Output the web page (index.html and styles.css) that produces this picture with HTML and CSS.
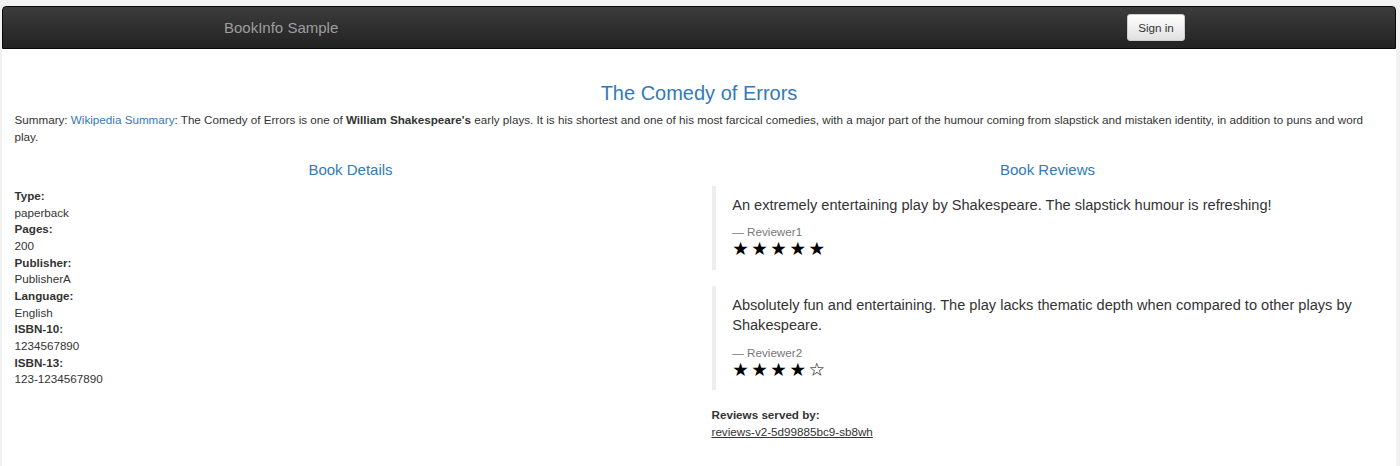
FILE: index.html
```html
<!DOCTYPE html>
<html lang="en">
<head>
    <meta charset="UTF-8">
    <title>Simple Bookstore App</title>
    <link rel="stylesheet" href="styles.css">
</head>
<body>
    <div class="page">
        <nav class="navbar">
            <div class="nav-container">
                <a class="brand" href="#">BookInfo Sample</a>
                <button class="btn-signin" type="button">Sign in</button>
            </div>
        </nav>

        <div class="content">
            <h3 class="book-title">The Comedy of Errors</h3>
            <p class="summary">Summary: <a href="#">Wikipedia Summary</a>: The Comedy of Errors is one of <b>William Shakespeare's</b> early plays. It is his shortest and one of his most farcical comedies, with a major part of the humour coming from slapstick and mistaken identity, in addition to puns and word play.</p>

            <div class="row">
                <div class="col">
                    <h4 class="col-title">Book Details</h4>
                    <dl class="details">
                        <dt>Type:</dt><dd>paperback</dd>
                        <dt>Pages:</dt><dd>200</dd>
                        <dt>Publisher:</dt><dd>PublisherA</dd>
                        <dt>Language:</dt><dd>English</dd>
                        <dt>ISBN-10:</dt><dd>1234567890</dd>
                        <dt>ISBN-13:</dt><dd>123-1234567890</dd>
                    </dl>
                </div>
                <div class="col">
                    <h4 class="col-title">Book Reviews</h4>
                    <blockquote class="review">
                        <p>An extremely entertaining play by Shakespeare. The slapstick humour is refreshing!</p>
                        <small>Reviewer1</small>
                        <div class="stars">★★★★★</div>
                    </blockquote>
                    <blockquote class="review">
                        <p>Absolutely fun and entertaining. The play lacks thematic depth when compared to other plays by Shakespeare.</p>
                        <small>Reviewer2</small>
                        <div class="stars">★★★★☆</div>
                    </blockquote>
                    <dl class="served">
                        <dt>Reviews served by:</dt>
                        <dd><u>reviews-v2-5d99885bc9-sb8wh</u></dd>
                    </dl>
                </div>
            </div>
        </div>
    </div>
</body>
</html>
```

FILE: styles.css
```css
html, body {
    margin: 0;
    padding: 0;
}
body {
    font-family: "Liberation Sans", Arial, sans-serif;
    font-size: 11.67px;
    line-height: 16.67px;
    color: #333;
    background-color: #f1f1f1;
}
.page {
    margin: 6px 4px 0 2px;
    min-height: 460px;
    background-color: #fff;
}
.navbar {
    height: 43px;
    background-image: linear-gradient(to bottom, #3c3c3c 0%, #222 100%);
    border: 1px solid #080808;
    border-radius: 4px 4px 0 0;
    box-sizing: border-box;
}
.nav-container {
    width: 975px;
    margin: 0 auto;
    padding: 0 12.5px;
    box-sizing: border-box;
    display: flex;
    align-items: center;
    justify-content: space-between;
    height: 100%;
}
.brand {
    font-size: 15px;
    color: #9d9d9d;
    text-decoration: none;
    line-height: 20px;
}
.btn-signin {
    font-family: "Liberation Sans", Arial, sans-serif;
    font-size: 11.67px;
    color: #333;
    height: 27px;
    width: 58px;
    padding: 0;
    margin-right: -11px;
    border: 1px solid #ccc;
    border-radius: 3px;
    background-image: linear-gradient(to bottom, #fff 0%, #e0e0e0 100%);
    box-shadow: inset 0 1px 0 rgba(255,255,255,0.15), 0 1px 1px rgba(0,0,0,0.075);
    cursor: pointer;
}
.content {
    padding: 0 12.5px;
}
.book-title {
    font-size: 20px;
    font-weight: normal;
    line-height: 22px;
    color: #337ab7;
    text-align: center;
    margin: 32.5px 0 8.33px;
}
.summary {
    margin: 0 0 8.33px;
}
.summary a {
    color: #337ab7;
    text-decoration: none;
}
.row {
    display: flex;
    margin: 0 -12.5px;
}
.col {
    flex: 1 1 50%;
    padding: 0 12.5px;
    min-width: 0;
}
.col-title {
    font-size: 15px;
    font-weight: normal;
    line-height: 16.5px;
    color: #337ab7;
    text-align: center;
    margin: 8px 0 8.33px;
}
.details, .served {
    margin: 0 0 16.67px;
}
.details {
    padding-top: 1.5px;
}
.details dt, .served dt {
    font-weight: bold;
}
.details dd, .served dd {
    margin: 0;
}
.review {
    margin: 0 0 16.67px;
    padding: 8.33px 16.67px;
    border-left: 4px solid #eee;
    font-size: 14.58px;
    line-height: 20.83px;
}
.review p {
    margin: 0 0 8.33px;
}
.review small {
    display: block;
    font-size: 11.67px;
    line-height: 16.67px;
    color: #777;
}
.review small:before {
    content: "\2014 \00A0";
}
.stars {
    font-family: "DejaVu Sans", sans-serif;
    font-size: 18.5px;
    line-height: 18px;
    letter-spacing: 2.5px;
    color: #000;
    padding-bottom: 2.8px;
}
```
